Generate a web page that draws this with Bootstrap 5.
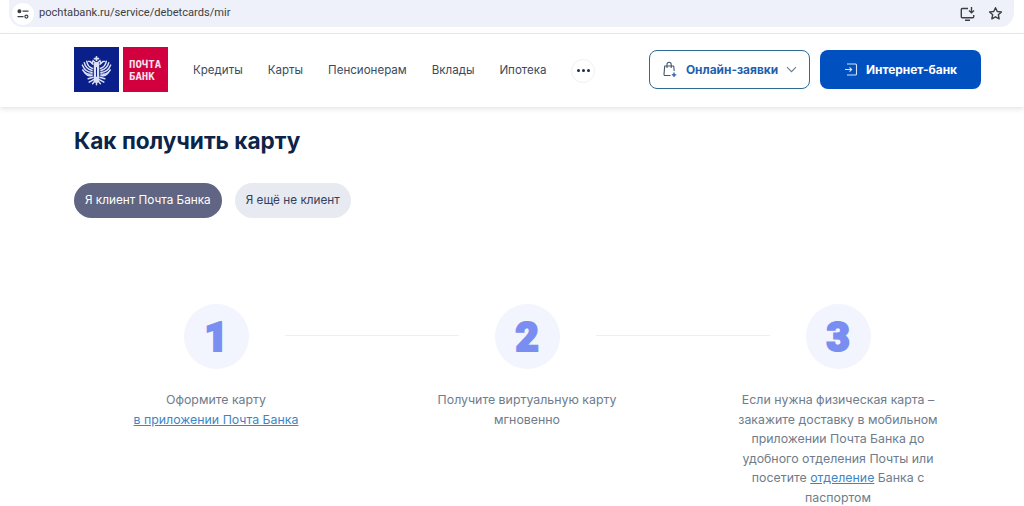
<!DOCTYPE html>
<html lang="ru">
<head>
  <meta charset="UTF-8">
  <title>Как получить карту</title>
  <meta name="viewport" content="width=device-width, initial-scale=1">
  <link href="https://cdn.jsdelivr.net/npm/bootstrap@5.3.0/dist/css/bootstrap.min.css" rel="stylesheet">
  <style>
    body {
      font-family: Inter, "Liberation Sans", sans-serif;
      background: #fff;
      overflow: hidden;
      height: 506px;
    }
    .chrome-bar {
      height: 34px;
      padding: 0 10px 6px 9px;
      border-bottom: 1px solid #e9ebef;
    }
    .omnibox {
      height: 27px;
      background: #eef1f9;
      border-radius: 0 0 14px 14px;
      padding: 0 11px 0 3px;
      font-family: Roboto, sans-serif;
      font-size: 11.1px;
      color: #3c4043;
    }
    .site-info {
      width: 22px;
      height: 22px;
      border-radius: 50%;
      background: #fff;
      margin-right: 5px;
    }
    .site-header {
      height: 73px;
      padding: 0 43px 2px 74px;
      background: #fff;
      box-shadow: 0 2px 5px rgba(30, 40, 70, .12);
      position: relative;
    }
    .logo-tile {
      width: 45px;
      height: 45px;
    }
    .logo-left { background: #0b1f8a; }
    .logo-right {
      background: #d2003f;
      color: #f6e4ea;
      font-family: "DejaVu Sans Mono", monospace;
      font-size: 10.7px;
      font-weight: 700;
      line-height: 11.5px;
      padding: 12px 0 0 6px;
      margin-left: 4px;
    }
    .top-links {
      margin-left: 25px;
      padding-top: 2px;
      gap: 25px;
      font-size: 11.55px;
      color: #3b4a60;
    }
    .top-links a { color: inherit; text-decoration: none; }
    .more-dots {
      width: 24px;
      height: 24px;
      border-radius: 50%;
      border: 1px solid #eef0f4;
    }
    .more-dots i {
      width: 3px;
      height: 3px;
      border-radius: 50%;
      background: #1d2c4a;
      margin: 0 1px;
    }
    .head-btn {
      width: 161px;
      height: 39px;
      border-radius: 8px;
      font-size: 11.9px;
      font-weight: 700;
      padding: 0;
    }
    .btn-orders {
      border: 1px solid #2d6a96;
      color: #1f5fae;
      background: #fff;
      margin-right: 10px;
    }
    .btn-bank {
      border: 0;
      background: #0050c0;
      color: #fff;
    }
    .page-body { padding: 0 43px 0 74px; }
    .page-title {
      font-size: 22.6px;
      font-weight: 700;
      color: #0b2447;
      margin: 19px 0 27px;
      line-height: 30px;
    }
    .pill-btn {
      height: 35px;
      border-radius: 18px;
      border: 0;
      font-size: 11.75px;
      padding: 0 11px;
    }
    .pill-on { background: #5f6582; color: #fff; }
    .pill-off { background: #e8eaf1; color: #34405c; margin-left: 13px; }
    .steps-row {
      display: grid;
      grid-template-columns: repeat(3, 284px);
      gap: 27px;
      margin-top: 86px;
    }
    .step-item {
      position: relative;
      text-align: center;
    }
    .step-item:not(:last-child)::after {
      content: "";
      position: absolute;
      top: 31px;
      left: calc(50% + 69px);
      width: 174px;
      height: 1px;
      background: #eceff4;
    }
    .step-num {
      width: 65px;
      height: 65px;
      border-radius: 50%;
      background: #f2f4fe;
      color: #7a8df0;
      font-family: Roboto, sans-serif;
      font-size: 40px;
      font-weight: 900;
      -webkit-text-stroke: 2.2px #7a8df0;
      padding-top: 3px;
      margin: 0 auto 21px;
    }
    .step-text {
      width: 212px;
      margin: 0 auto;
      font-size: 12.35px;
      line-height: 19.6px;
      color: #6e7c8c;
    }
    .step-text a { color: #3d85c6; }
  </style>
</head>
<body>
  <div class="chrome-bar">
    <div class="omnibox d-flex align-items-center">
      <span class="site-info d-flex align-items-center justify-content-center">
        <svg width="12" height="10" viewBox="0 0 12 10" fill="none" stroke="#3c4043" stroke-width="1.2">
          <circle cx="2.4" cy="2.2" r="1.4" fill="#3c4043"/><path d="M5.5 2.2H11.5M.5 7.6H6.5"/><circle cx="9.4" cy="7.6" r="1.5"/>
        </svg>
      </span>
      <span>pochtabank.ru/service/debetcards/mir</span>
      <span class="ms-auto d-flex align-items-center gap-2">
        <svg width="16" height="16" viewBox="0 0 16 16" fill="none" stroke="#3c4043" stroke-width="1.4">
          <path d="M8 2.5H2.2a.9.9 0 0 0-.9.9v7.4a.9.9 0 0 0 .9.9h10.6a.9.9 0 0 0 .9-.9V9M5 14.2h5"/><path d="M11.5 1v5.5M9 4.5l2.5 2.4L14 4.5"/>
        </svg>
        <svg class="ms-1" width="15" height="15" viewBox="0 0 16 16" fill="none" stroke="#3c4043" stroke-width="1.5" stroke-linejoin="round">
          <path d="M8 1.8l1.9 4 4.4.5-3.3 3 .9 4.4L8 11.5l-3.9 2.2.9-4.4-3.3-3 4.4-.5z"/>
        </svg>
      </span>
    </div>
  </div>

  <header class="site-header d-flex align-items-center">
    <div class="logo-tile logo-left">
      <svg width="45" height="45" viewBox="0 0 45 46" fill="none" stroke="#dbe1f4" stroke-linecap="round">
        <g id="wing" stroke-width="1.5">
          <path d="M19 17.5l-3-2.6-1.8-.2"/>
          <path d="M18.5 22C15 21 13 18 12.5 14.5"/>
          <path d="M18 24c-4-1-7-3.5-8-8"/>
          <path d="M18 26c-4 0-8-2.5-10-7.5"/>
          <path d="M18 27.5c-3.5 1-7 0-9.500-4"/>
          <path d="M18 29c-2.500 1-5 .500-7-2"/>
          <path d="M19 31l-5 1.500"/>
          <path d="M20 33l-5 3"/>
          <path d="M21 34.500l-2.500 3"/>
        </g>
        <use href="#wing" transform="matrix(-1 0 0 1 45 0)"/>
        <path d="M22.500 18v16" stroke-width="5.500"/>
        <path d="M22.500 21v9" stroke="#0b1f8a" stroke-width="1"/>
        <path d="M22.500 34v4.500" stroke-width="1.500"/>
        <path d="M18 17l1-3 3.500 3 3.500-3 1 3" stroke-width="1.500"/>
        <path d="M22.500 10v3.500M20.500 12h4" stroke-width="1.800"/>
      </svg>
    </div>
    <div class="logo-tile logo-right">ПОЧТА<br>БАНК</div>

    <nav class="top-links d-flex align-items-center">
      <a href="#">Кредиты</a>
      <a href="#">Карты</a>
      <a href="#">Пенсионерам</a>
      <a href="#">Вклады</a>
      <a href="#">Ипотека</a>
      <span class="more-dots d-flex align-items-center justify-content-center"><i></i><i></i><i></i></span>
    </nav>

    <div class="ms-auto d-flex">
      <button class="btn head-btn btn-orders d-flex align-items-center justify-content-center">
        <svg class="me-2" width="16" height="17" viewBox="0 0 16 17" fill="none" stroke="#44566a" stroke-width="1.100">
          <path d="M8.500 14.500H3a1 1 0 0 1-1-1.100L2.700 5h9l.5 5M5 7V3.300a2.100 2.100 0 0 1 4.200 0V7" stroke-linejoin="round"/>
          <path d="M12 11.500v4.500M9.800 13.800h4.500" stroke="#1f5fae" stroke-width="1.300"/>
        </svg>
        Онлайн-заявки
        <svg class="ms-2" width="11" height="7" viewBox="0 0 11 7" fill="none" stroke="#6a7a8c" stroke-width="1.100"><path d="M1 1.200l4.500 4.500L10 1.200"/></svg>
      </button>
      <button class="btn head-btn btn-bank d-flex align-items-center justify-content-center">
        <svg class="me-2" width="14" height="13" viewBox="0 0 14 13" fill="none" stroke="#d5e3f7" stroke-width="1.100">
          <path d="M3 1h8.500a1 1 0 0 1 1 1v9a1 1 0 0 1-1 1H3M1 6.500h6.500M5.500 4.300l2.200 2.200-2.200 2.200"/>
        </svg>
        Интернет-банк
      </button>
    </div>
  </header>

  <main class="page-body">
    <h1 class="page-title">Как получить карту</h1>
    <div class="d-flex">
      <button class="btn pill-btn pill-on">Я клиент Почта Банка</button>
      <button class="btn pill-btn pill-off">Я ещё не клиент</button>
    </div>

    <div class="steps-row">
      <div class="step-item">
        <div class="step-num d-flex align-items-center justify-content-center">1</div>
        <div class="step-text">Оформите карту<br><a href="#">в приложении Почта Банка</a></div>
      </div>
      <div class="step-item">
        <div class="step-num d-flex align-items-center justify-content-center">2</div>
        <div class="step-text">Получите виртуальную карту мгновенно</div>
      </div>
      <div class="step-item">
        <div class="step-num d-flex align-items-center justify-content-center">3</div>
        <div class="step-text">Если нужна физическая карта – закажите доставку в мобильном приложении Почта Банка до удобного отделения Почты или посетите <a href="#">отделение</a> Банка с паспортом</div>
      </div>
    </div>
  </main>
</body>
</html>
